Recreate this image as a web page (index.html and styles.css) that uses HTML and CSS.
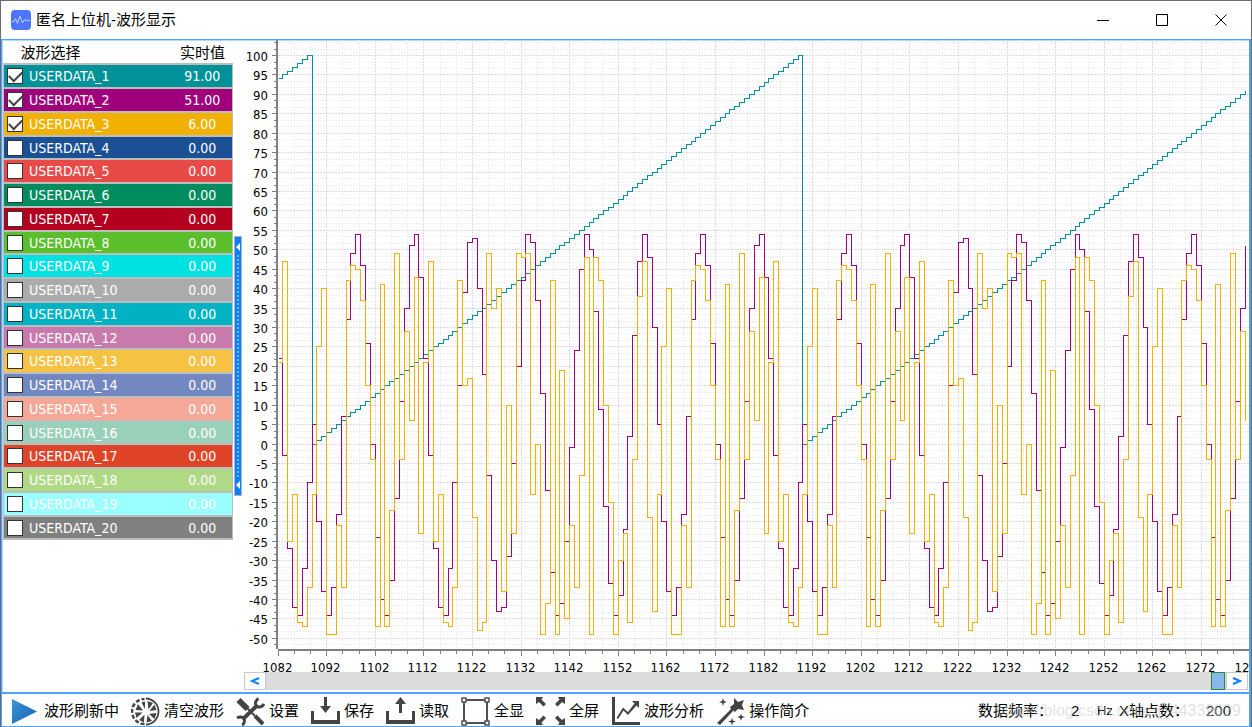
FILE: index.html
```html
<!DOCTYPE html>
<html lang="zh-CN">
<head>
<meta charset="utf-8">
<title>匿名上位机-波形显示</title>
<link rel="stylesheet" href="styles.css">
</head>
<body>
<div class="window">
  <header class="titlebar">
    <svg class="app-icon" viewBox="0 0 20 20" aria-hidden="true">
      <rect width="20" height="20" rx="4" fill="#4f74ff"/>
      <path d="M1 11.500h2l1.500-3 2 5L9 6l2.500 7 2-3.500 1.500 1.500 2-1 2 1" fill="none" stroke="#b9d4ff" stroke-width="1"/>
    </svg>
    <h1 class="title">匿名上位机-波形显示</h1>
    <div class="window-buttons">
      <button class="window-button" aria-label="最小化"><svg viewBox="0 0 12 12"><path d="M0 6.500h12"/></svg></button>
      <button class="window-button" aria-label="最大化"><svg viewBox="0 0 12 12"><path d="M.5.500h11v11H.5z"/></svg></button>
      <button class="window-button" aria-label="关闭"><svg viewBox="0 0 12 12"><path d="M.5.500l11 11M11.500.500l-11 11"/></svg></button>
    </div>
  </header>

  <main class="content">
    <aside class="sidebar">
      <table class="channels">
        <thead><tr><th class="head-name" scope="col">波形选择</th><th class="head-value" scope="col">实时值</th></tr></thead>
        <tbody id="channel-rows"></tbody>
      </table>
    </aside>
    <button class="splitter" aria-label="折叠列表">
      <svg class="splitter-arrow" viewBox="0 0 4 8"><path d="M4 0v8L0 4z"/></svg>
      <span class="splitter-dots"></span>
      <svg class="splitter-arrow" viewBox="0 0 4 8"><path d="M4 0v8L0 4z"/></svg>
    </button>
    <section class="plot">
      <svg class="chart" id="chart" role="img" aria-label="波形"></svg>
      <div class="scrollbar">
        <button class="scroll-button" aria-label="向左"><svg viewBox="0 0 10 8"><path d="M9 1L2 4l7 3"/></svg></button>
        <div class="scroll-track"><span class="scroll-thumb"></span></div>
        <button class="scroll-button" aria-label="向右"><svg viewBox="0 0 10 8"><path d="M1 1l7 3-7 3"/></svg></button>
      </div>
    </section>
  </main>

  <footer class="toolbar">
    <button class="tool">
      <svg class="tool-icon" viewBox="0 0 29 29"><defs><linearGradient id="play" x1="0" y1="0" x2="1" y2="1"><stop offset="0" stop-color="#3f96d6"/><stop offset="1" stop-color="#1560b4"/></linearGradient></defs><path d="M1 2l25 12.500L1 27z" fill="url(#play)"/></svg>
      <span>波形刷新中</span>
    </button>
    <button class="tool">
      <svg class="tool-icon" viewBox="0 0 29 29">
        <g fill="none" stroke="#444"><path stroke-width="1.800" d="M15 1.500a13 13 0 0 1 12.500 13A13 13 0 0 1 15 27.500"/><path stroke-width="2.500" stroke-dasharray="4 2" d="M13.500 27A12.500 12.500 0 0 1 13.500 2"/></g>
        <path fill="#444" d="M14 4.500v7.500l-3.500-6.500zM16.500 4l5.500 2-4.500 6.500zM23.500 7.500l2 5.500-7 1zM25.500 16l-2 6-5.500-5zM21 24l-5.500 1.500 1-7.500zM13 25.500l-5-2.500 5.500-5.500zM5.500 21l-1.500-5.500 7.500 0zM4.500 13l2.500-6 5 6.500z"/>
      </svg>
      <span>清空波形</span>
    </button>
    <button class="tool">
      <svg class="tool-icon" viewBox="0 0 29 29">
        <g fill="none" stroke="#444"><path stroke-width="6" d="M2.500 3l9 9"/><path stroke-width="2" d="M11 11l8 8"/><path stroke-width="4" d="M19 19l8 8"/><path stroke-width="4" d="M7 22L21.500 8"/><path stroke-width="3" d="M22.500 1.500c-3 2-4 5-2 7.500 2.500 2 6 1 7.500-2M1 21c3-2 6-1 7 1 1 2.500 0 5-2 6"/></g>
      </svg>
      <span>设置</span>
    </button>
    <button class="tool">
      <svg class="tool-icon" viewBox="0 0 29 29"><path fill="#444" d="M0 14h3v9h23v-9h3v13H0zM13 0h3v9h4l-5.500 7L9 9h4z"/></svg>
      <span>保存</span>
    </button>
    <button class="tool">
      <svg class="tool-icon" viewBox="0 0 29 29"><path fill="#444" d="M0 14h3v9h23v-9h3v13H0zM13 16h3V7h4l-5.500-7L9 7h4z"/></svg>
      <span>读取</span>
    </button>
    <button class="tool">
      <svg class="tool-icon" viewBox="0 0 29 29"><g fill="#fff" stroke="#505050" stroke-width="1.500"><path stroke-width="2" d="M3 3h23v23H3z"/><path d="M1 1h4v4H1zM24 1h4v4h-4zM1 24h4v4H1zM24 24h4v4h-4z"/></g></svg>
      <span>全显</span>
    </button>
    <button class="tool">
      <svg class="tool-icon" viewBox="0 0 29 29"><path fill="#444" d="M0 0h7L5.500 2.500 10 7 7.500 9.500 3 5 0 7zM29 0h-7l1.500 2.500L19 7l2.500 2.500L26 5l3 2zM0 28h7l-1.500-2.500L10 21l-2.500-2.500L3 23l-3-2zM29 28h-7l1.500-2.500L19 21l2.500-2.500L26 23l3-2z"/></svg>
      <span>全屏</span>
    </button>
    <button class="tool">
      <svg class="tool-icon" viewBox="0 0 29 29"><path fill="#444" d="M1 0h3v25h25v3H1zM21 4h7v7l-2.500-2.500L17 18l-4.500-4.500L7 22l-1.500-1 6.500-10.500 5 4.500 6.500-8.500z"/></svg>
      <span>波形分析</span>
    </button>
    <button class="tool">
      <svg class="tool-icon" viewBox="0 0 29 29"><path fill="#444" d="M18 1l4 4 6-2-2 5 2 5-6-1-3 3-1.500-1.500L4 28l-3-2 14-14-1-2 4-3zM7 1l1 3 3 1-3 1-1 3-1-3-3-1 3-1zM25 17l1 2 3 1-3 1-1 3-1-3-3-1 3-1zM16 21l1 2.500 3 1-3 1-1 3-1-3-3-1 3-1z"/></svg>
      <span>操作简介</span>
    </button>
    <div class="status">
      <span class="watermark" aria-hidden="true">https://blog.csdn.net/qq_44339029</span>
      <label class="status-label" for="rate">数据频率：</label>
      <output class="rate" id="rate">2</output>
      <span class="unit">Hz</span>
      <label class="status-label" for="points">X轴点数：</label>
      <input class="points" id="points" type="text" value="200">
    </div>
  </footer>
</div>
<script src="app.js"></script>
</body>
</html>
```

FILE: styles.css
```css
* { box-sizing: border-box; }

html, body { height: 100%; }

body {
  margin: 0;
  background: #fff;
  color: #000;
  font: 15px/20px "Liberation Sans", "Noto Sans CJK SC", sans-serif;
}

button {
  padding: 0;
  border: 0;
  background: none;
  color: inherit;
  font: inherit;
}

.window {
  display: flex;
  flex-direction: column;
  height: 100%;
  border: 1px solid #6b6b6b;
  border-bottom: 0;
}

.titlebar {
  display: flex;
  align-items: center;
  height: 38px;
  padding-left: 10px;
}

.app-icon { width: 20px; height: 20px; }

.title {
  flex: 1;
  margin: 0 0 0 5px;
  font-size: 15px;
  font-weight: 400;
}

.window-buttons { display: flex; padding-right: 1px; gap: 1px; }

.window-button {
  display: grid;
  place-items: center;
  width: 58px;
  height: 36px;
}

.window-button svg {
  width: 12px;
  height: 12px;
  fill: none;
  stroke: #000;
}

.content {
  display: flex;
  flex: 1;
  min-height: 0;
  border: 1px solid #4ea3ff;
  border-right-width: 2px;
  border-bottom: 0;
  box-shadow: inset 1px 1px #b5d8ff;
}

.sidebar { flex: none; width: 231px; padding-left: 1px; }

.channels {
  width: 100%;
  border-collapse: collapse;
}

.channels th {
  height: 24px;
  padding: 2px 0 0;
  font-weight: 400;
}

.channels .head-name { padding-left: 17px; text-align: left; }
.channels .head-value { width: 60px; text-align: center; }

.channel {
  height: 24px;
  border: solid #bdbdbd;
  border-width: 2px 1px;
  color: #fff;
  font: 14px/16px "DejaVu Sans Condensed", "Noto Sans", sans-serif;
}

.channel:nth-child(4n) { height: 23px; }

.channel td { padding: 0; }
.channel .channel-value { text-align: center; }

.channel-name {
  display: flex;
  align-items: center;
  gap: 6px;
  padding-left: 3px;
}

.channel-check {
  appearance: none;
  display: grid;
  place-items: center;
  width: 16px;
  height: 16px;
  margin: 0;
  border: 1px solid #333;
  background: #fff;
}

.channel-check:checked::before {
  content: "";
  width: 11px;
  height: 6px;
  margin-bottom: 3px;
  border: solid #444;
  border-width: 0 0 2px 2px;
  transform: rotate(-45deg);
}

.splitter {
  display: flex;
  flex: none;
  flex-direction: column;
  align-items: center;
  align-self: center;
  gap: 4px;
  width: 8px;
  height: 260px;
  margin: 0 1px;
  padding: 6px 0;
  border: 1px solid #a9b4c0;
  background: #0a80ff;
}

.splitter-arrow { width: 4px; height: 8px; fill: #fff; }

.splitter-dots { flex: 1; border-left: 2px dotted #6fb4ff; }

.plot {
  display: flex;
  flex: 1;
  flex-direction: column;
  min-width: 0;
  overflow: hidden;
}

.chart {
  flex: 1;
  width: 100%;
  min-height: 0;
  overflow: visible;
}

.grid-minor { stroke: #efefef; stroke-dasharray: 2 1; }
.grid-major { stroke: #dcdcdc; stroke-dasharray: 2 1; }
.axis { stroke: #808080; }
.axis-line { stroke: #808080; stroke-width: 2; }
.axis-label { font: 13px "DejaVu Sans Condensed", "Noto Sans", sans-serif; }
.wave { fill: none; stroke-width: 1; shape-rendering: crispEdges; }

.scrollbar {
  display: flex;
  height: 18px;
  margin: 0 1px 2px;
  background: #dcdcdc;
}

.scroll-button {
  display: grid;
  place-items: center;
  width: 22px;
  border: 1px solid #c8c8c8;
  background: #fff;
}

.scroll-button svg {
  width: 10px;
  height: 8px;
  fill: none;
  stroke: #0a80ff;
  stroke-width: 2;
}

.scroll-track {
  display: flex;
  flex: 1;
  justify-content: flex-end;
  padding-right: 1px;
}

.scroll-thumb {
  width: 14px;
  border: 1px solid #1f8a3a;
  background: #8ab8ea;
}

.toolbar {
  display: flex;
  align-items: center;
  gap: 12px;
  height: 35px;
  padding: 2px 0 0 9px;
  border: 1px solid #4ea3ff;
  border-width: 2px 2px 1px 1px;
}

.tool {
  display: flex;
  align-items: center;
  gap: 4px;
  white-space: nowrap;
}

.tool-icon { width: 29px; height: 29px; }

.status {
  position: relative;
  display: flex;
  flex: 1;
  justify-content: flex-end;
  align-items: center;
  white-space: nowrap;
}

.status-label { flex: none; }

.rate { width: 44px; padding-left: 18px; }

.unit { width: 22px; font-size: 13px; }

.points {
  width: 60px;
  padding: 0 18px 0 0;
  border: 0;
  background: none;
  color: #222;
  font: inherit;
  text-align: right;
}

.watermark {
  position: absolute;
  right: 8px;
  top: 0;
  color: #c4c4c480;
  font: 16px/20px "Liberation Sans", sans-serif;
}
```

FILE: app.js
```js
const channelColors = [
  '#009298', '#a0007c', '#f2b000', '#1b5095', '#e84a48', '#008c5e', '#b3001f', '#5bbe2b', '#00e1e1', '#ababab',
  '#00b2c3', '#c87aac', '#f6c244', '#7388c1', '#f6a898', '#98d0b9', '#e04428', '#afd984', '#9affff', '#808080'
];
const liveValues = { 1: '91.00', 2: '51.00', 3: '6.00' };

document.getElementById('channel-rows').innerHTML = channelColors.map((color, i) => {
  const n = i + 1;
  return `<tr class="channel" style="background:${color}">
    <td><label class="channel-name"><input class="channel-check" type="checkbox"${n <= 3 ? ' checked' : ''}>USERDATA_${n}</label></td>
    <td class="channel-value">${liveValues[n] || '0.00'}</td></tr>`;
}).join('');

// One repeat of the third channel; it comes round again after 71 counts.
const thirdWave = [
  -13, 25, 40, -49, -49, -21, -37, 42, 46, 45, 37, 15, -4, -47, 41, -47, -17, 49, -4, 29,
  6, 43, -23, 21, 47, -25, -13, -46, -47, -37, 42, 15, 17, -19, -48, -46, 49, 35, 40, -38,
  10, -23, 49, 48, 49, -13, 0, -49, -41, 42, -49, 19, -45, -21, -37, -8, 48, -49, 48, 42,
  10, -15, -49, -30, -23, -46, -4, 38, 47, -19, -43
];
const waves = [
  c => c,
  c => Math.trunc(5 - 50 * Math.sin(c * 12 * Math.PI / 71)),
  c => thirdWave[c % 71]
];

const firstPoint = 1082, firstCount = 94, pointCount = 200;
const topValue = 104, bottomValue = -53;

function drawChart() {
  const svg = document.getElementById('chart');
  const { width, height } = svg.getBoundingClientRect();
  const left = 35, bottom = height - 22;
  const stepX = (width + 1 - left) / pointCount;
  const x = i => left + i * stepX;
  const y = v => (topValue - v) * bottom / (topValue - bottomValue);
  const snap = v => Math.floor(v) + 0.5;
  const line = (cls, x1, y1, x2, y2) => `<path class="${cls}" d="M${x1} ${y1}L${x2} ${y2}"/>`;
  let minor = '', major = '', axes = '', labels = '';

  for (let k = 0; k * 10 / 3 <= pointCount; k++) {
    const px = snap(x(k * 10 / 3));
    const isMajor = k % 3 === 0;
    if (isMajor) {
      if (k) major += line('grid-major', px, 0, px, bottom);
      labels += `<text class="axis-label" text-anchor="middle" x="${px - 1}" y="${bottom + 22}">${firstPoint + k / 3 * 10}</text>`;
    } else {
      minor += line('grid-minor', px, 0, px, bottom);
    }
    axes += line('axis', px, bottom, px, bottom + (isMajor ? 6 : 4));
  }
  for (let k = -31; k <= 62; k++) {
    const value = k * 5 / 3;
    const py = snap(y(value));
    if (k % 3 === 0 && value <= 100 && value >= -50) {
      major += line('grid-major', left, py, width, py);
      labels += `<text class="axis-label" text-anchor="end" x="${left - 10}" y="${py + 5}">${value}</text>`;
      axes += line('axis', left - 6, py, left, py);
    } else {
      minor += line('grid-minor', left, py, width, py);
      axes += line('axis', left - 4, py, left, py);
    }
  }
  axes += line('axis-line', left - 1, 0, left - 1, bottom - 1);
  axes += line('axis-line', left, bottom, width, bottom);

  const curves = waves.map((wave, n) => {
    let d = '';
    for (let i = 0; i < pointCount; i++) {
      const px = snap(x(i)), py = snap(y(wave((firstCount + i) % 101)));
      d += d ? `H${px}V${py}` : `M${px} ${py}`;
    }
    return `<path class="wave" stroke="${channelColors[n]}" d="${d}"/>`;
  }).join('');

  svg.innerHTML = minor + major + axes + curves + labels;
}

drawChart();
window.addEventListener('resize', drawChart);
```
